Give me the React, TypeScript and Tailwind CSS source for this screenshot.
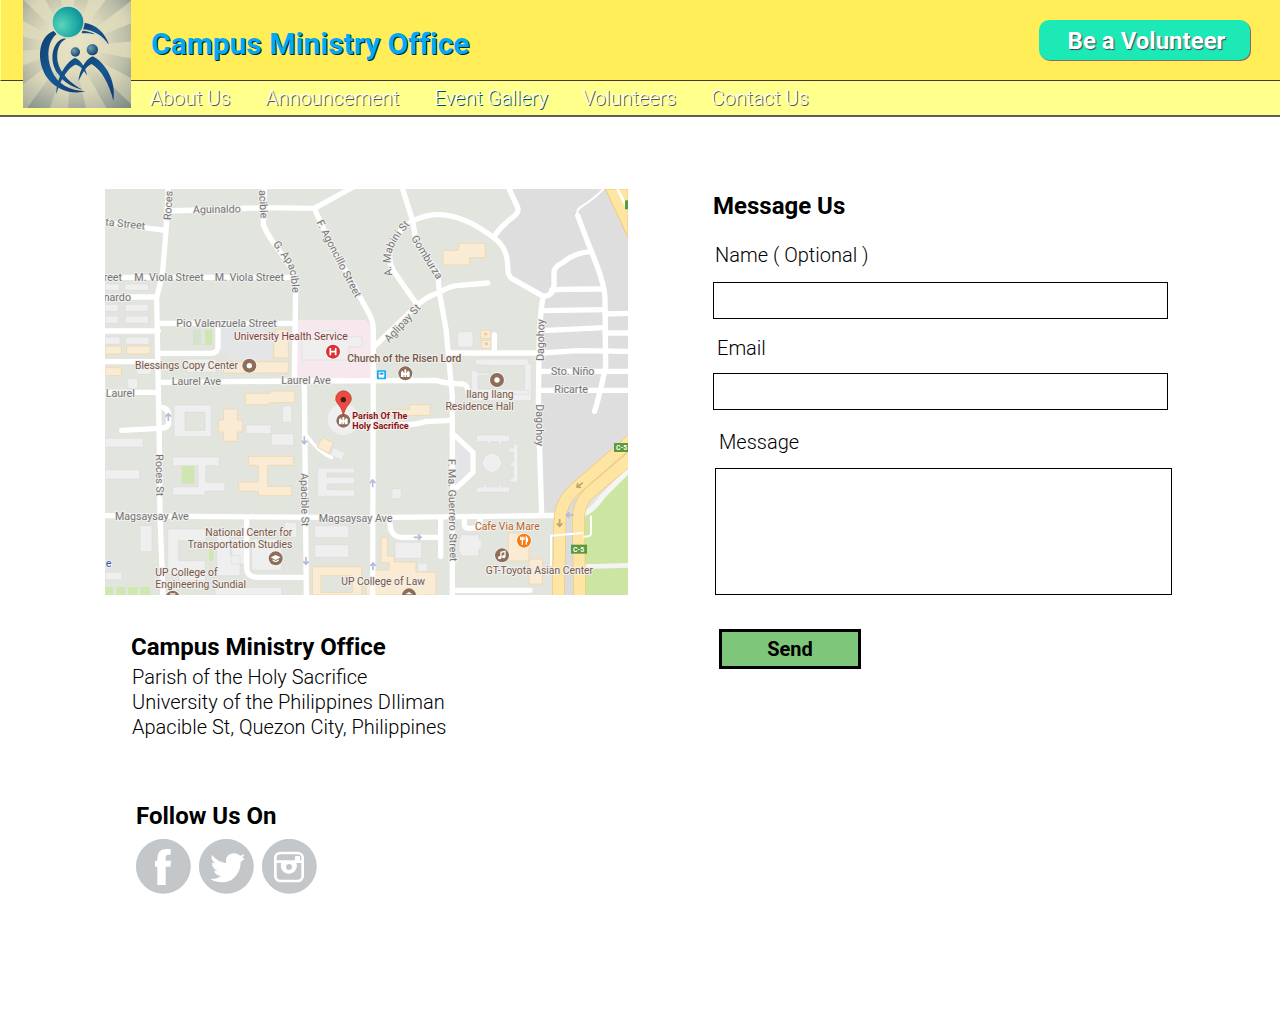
import React from "react";

const minorRoads = [
  "M190 0 L183 125 L172 260 L155 325 L160 606 L163 760 L165 980 L174 1218",
  "M190 66 L480 56 L628 58 L745 -6",
  "M0 100 L180 124",
  "M478 0 L475 105 Q478 122 515 175 L556 232 Q572 255 572 300 L568 575",
  "M628 58 L665 140 L790 370 Q805 395 805 425 L803 1218",
  "M0 265 H572",
  "M0 324 H155",
  "M160 403 H568",
  "M0 426 H160",
  "M162 493 H318 Q339 493 339 472 V410",
  "M0 518 H160",
  "M165 580 L600 576 L993 574 Q1020 585 1075 585 Q1088 588 1090 612",
  "M0 610 H160",
  "M598 580 L600 800 L604 1218",
  "M165 655 Q191 655 191 680 V700 Q191 718 165 718 L50 724",
  "M935 345 L865 245 Q840 200 870 150 Q905 85 990 77 Q1070 73 1165 145 L1182 160 Q1207 185 1208 230 Q1208 260 1220 268 L1315 322",
  "M1210 -6 L1238 55 Q1243 68 1227 82 Q1190 108 1165 145",
  "M893 0 L923 95 L933 160 L998 250 L1003 310 L1023 420 L1038 580 L1042 620 V1218",
  "M1148 282 L1055 290 Q1040 290 1003 310 Q960 325 930 355 L805 475",
  "M1035 492 H1310 L1420 485 L1569 487",
  "M1168 437 V492",
  "M1315 322 Q1305 360 1302 490 L1300 660 L1310 975",
  "M1315 322 Q1345 320 1347 290 V250 Q1348 232 1375 220 Q1410 190 1460 188",
  "M1340 303 Q1350 300 1495 300",
  "M1418 80 L1460 190 Q1500 285 1500 330 L1502 530 Q1490 595 1469 667",
  "M1310 365 L1500 362",
  "M1500 375 L1569 373",
  "M1310 425 L1500 416",
  "M1500 432 H1569",
  "M1305 547 H1569",
  "M1305 604 H1569",
  "M0 980 L330 983 L783 986 L1240 981 L1420 978",
  "M425 985 V1140 Q428 1165 458 1165 H600",
  "M853 990 L857 1020 Q865 1045 890 1045 H1000",
  "M1007 985 V1102",
  "M1078 990 V1008 Q1080 1020 1100 1018 Q1124 1018 1126 990",
  "M1050 740 L1104 790 V850 L1055 896",
  "M870 707 Q930 709 960 698 L1040 694",
  "M1050 1204 H1275",
];

const greyBuildings = [
  "M0 285 h44 v19 h-44z M60 285 h71 v19 h-71z M0 346 h40 v21 h-40z M61 346 h69 v21 h-69z M0 381 h40 v22 h-40z M61 381 h69 v22 h-69z",
  "M0 444 h45 v22 h-45z M62 444 h70 v22 h-70z M95 534 h44 v22 h-44z M68 568 h30 v30 h-30z M245 510 h88 v40 h-88z",
  "M590 450 h61 v-25 h50 v18 h70 v30 h-40 v40 h-141z",
  "M1058 428 h46 v46 h-46z",
  "M1110 510 h160 v15 h9 v110 h-180 v-90 h18z",
  "M207 648 h112 v95 h-112z",
  "M0 748 h115 v26 h-115z M0 842 h104 v28 h-104z",
  "M203 804 h139 v26 h-40 v50 h58 v26 h-60 v12 h-97 v-25 h76 v-63 h-76z",
  "M423 708 h76 v26 h67 v35 h-67 v-35 h-76z M535 650 h25 v50 h-28 v-30z",
  "M638 837 h111 v15 h-56 v12 h56 v20 h-56 v18 h56 v20 h-111z M685 775 l35 17 l-10 22 l-35 -17z",
  "M629 1010 h102 v36 h-102z M629 1067 h102 v38 h-102z M105 1010 h36 v78 h-36z M0 1150 h50 v22 h-50z",
  "M188 1020 h115 v35 h-82 v60 h80 v60 h-80 v-20 h-33z M335 1020 h40 v80 h30 v60 h-70z M380 1050 h40 v75 h-40z M440 1050 h90 v94 h-90z M538 1000 h37 v45 h-37z",
  "M330 1195 h200 v23 h-200z",
  "M1114 738 h100 v20 h-24 v10 h-8 v-10 h-26 v6 h-8 v-6 h-34z M1225 765 h14 v115 h-24 v-13 h10 v-35 h-10 v-12 h10 v-30 h-14 v-13 h14z M1114 894 h22 v-10 h8 v10 h36 v-8 h8 v8 h26 v16 h-100z",
  "M861 899 h28 v30 h-28z M870 1060 h80 v48 h-80z M938 1122 h28 v26 h-28z M1067 1037 h54 v14 h8 v30 h-8 v20 h-54 v-12 h-5 v-40 h5z",
  "M1161 791 l20 10 l10 22 l-10 20 l-20 9 l-20 -9 l-10 -20 l10 -22z",
  "M1220 604 h50 v12 h-50z",
];

const tanBuildings = [
  "M0 471 h49 v24 h-49z M64 471 h72 v24 h-72z M0 536 h49 v24 h-49z",
  "M512 422 h38 v85 h-44 v-30z M355 518 h195 v34 h-195z",
  "M1061 163 h80 v43 h-47 v22 h-80 v-44 h47z",
  "M1127 424 h30 v24 h-30z M1130 454 h27 v24 h-27z",
  "M421 613 h75 v-7 h73 v35 h-76 v6 h-72z",
  "M355 660 h42 v33 h15 v36 h-15 v28 h-42 v-28 h-15 v-36 h15z",
  "M430 802 h135 v27 h-77 v63 h72 v28 h-100 v-13 h-59 v-28 h59 v-50 h-30z",
  "M684 620 h20 v14 h-20z",
  "M622 1133 h148 v85 h-148z M853 662 h60 v-15 h62 v32 h-122z",
  "M828 1046 h20 v55 h20 v18 h65 v30 h60 v69 h-210 v-40 h24 v-35 h45 v-22 h-24z",
  "M1210 1032 h62 v84 h-62z M1272 1110 h40 v75 h-40z",
];

function MapLabel({ x, y, children, angle = 0, color = "#757575", size = 32, weight = 400, anchor = "start" }: {
  x: number;
  y: number;
  children: string;
  angle?: number;
  color?: string;
  size?: number;
  weight?: number;
  anchor?: "start" | "middle" | "end";
}) {
  return (
    <text
      x={x}
      y={y}
      transform={`rotate(${angle} ${x} ${y})`}
      fill={color}
      stroke="#f0f0ee"
      strokeWidth={6}
      strokeLinejoin="round"
      paintOrder="stroke"
      fontSize={size}
      fontWeight={weight}
      textAnchor={anchor}
    >
      {children}
    </text>
  );
}

function CurvedLabel({ id, d, children }: { id: string; d: string; children: string }) {
  return (
    <>
      <path id={id} d={d} fill="none" />
      <text fill="#757575" stroke="#f0f0ee" strokeWidth={6} strokeLinejoin="round" paintOrder="stroke" fontSize={32}>
        <textPath href={`#${id}`}>{children}</textPath>
      </text>
    </>
  );
}

function Arrow({ x, y, angle, color = "#b4bbd8" }: { x: number; y: number; angle: number; color?: string }) {
  return (
    <path
      d="M-12 0 H10 M1 -8 L10 0 L1 8"
      transform={`translate(${x} ${y}) rotate(${angle})`}
      fill="none"
      stroke={color}
      strokeWidth={5}
    />
  );
}

function Poi({ x, y, color = "#8d6e5a", children }: { x: number; y: number; color?: string; children: React.ReactNode }) {
  return (
    <g transform={`translate(${x} ${y})`}>
      <circle r={23} fill="#fff" opacity={0.8} />
      <circle r={21} fill={color} />
      {children}
    </g>
  );
}

const church = <path d="M-13 11 V-4 L-9 -8 L-5 -4 V11z M-3 11 V-9 L0 -14 L3 -9 V11z M5 11 V-4 L9 -8 L13 -4 V11z M-6 -1 H6 V5 H-6z" fill="#fff" />;

function CampusMap() {
  const brown = "#795746";
  return (
    <svg
      viewBox="0 0 1569 1218"
      className="block w-full"
      role="img"
      aria-label="Map of the Parish of the Holy Sacrifice and nearby streets"
    >
      <rect width="1569" height="1218" fill="#e2e4de" />
      <path d="M1210 0 H1569 V756 L1355 950 L1350 975 H1310 L1300 606 L1315 322 L1208 262 L1200 180 L1165 145 L1240 65z" fill="#dedede" />
      <path d="M576 393 H783 L805 425 V567 H576z" fill="#f7e8ee" />
      <path d="M345 405 H505 V512 H365 V490 H345z M1050 740 L1104 790 V850 L1050 896z" fill="#e4e5e6" />
      <path d="M1569 835 L1440 985 V1218 H1569z" fill="#cce5a2" />
      <path d="M300 422 h22 v46 h-22z M312 1080 h13 v35 h-13z" fill="#cfe6b2" />
      <path d="M264 422 h24 v46 h-24z" fill="#d5e2cc" />
      <path d="M0 1194 h24 v24 h-24z M34 1194 h27 v24 h-27z M69 1194 h28 v24 h-28z M106 1194 h28 v24 h-28z" fill="#cfe8ad" />
      <g fill="#efefef" stroke="#dcdddd" strokeWidth={2}>
        {greyBuildings.map((d) => <path key={d} d={d} />)}
      </g>
      <path d="M230 830 h38 v54 h-38z" fill="#cfe6b2" />
      <g fill="#e2e4de" stroke="#d8dad8" strokeWidth={2}>
        <path d="M240 670 h60 v54 h-60z M1155 530 h104 v70 h-140 v-40 h36z M1118 528 h34 v24 h-34z M666 852 h26 v12 h-26z M666 885 h26 v16 h-26z" />
      </g>
      <g fill="#faebd4" stroke="#efd9b4" strokeWidth={3}>
        {tanBuildings.map((d) => <path key={d} d={d} />)}
      </g>
      <path d="M648 1160 h94 v50 h-94z" fill="#e2e4de" stroke="#efd9b4" strokeWidth={3} />
      <path d="M1137 431 h10 v8 h-10z M1139 460 h10 v9 h-10z" fill="#e9cfa2" />
      <circle cx="715" cy="691" r="47" fill="#efefef" />
      <g fill="none" stroke="#fff" strokeWidth={16} strokeLinecap="round" strokeLinejoin="round">
        {minorRoads.map((d) => <path key={d} d={d} />)}
        <path d="M606 740 Q640 790 680 806" strokeWidth={10} />
        <path d="M1500 -6 Q1480 20 1425 56 Q1417 62 1416 74" strokeWidth={6} />
        <path d="M1575 840 L1495 920 Q1455 975 1430 975" strokeWidth={16} stroke="#f5f5f5" />
        <path d="M1440 1133 L1569 1129" strokeWidth={14} stroke="#f4f4f4" />
      </g>
      <path d="M651 746 l34 15 l-14 32 l-34 -18z" fill="#faebd4" stroke="#efd9b4" strokeWidth={3} />
      <path d="M1501 0 H1569 V145z" fill="#ffe5a4" stroke="#eccb78" strokeWidth={3} />
      <path d="M1537 0 L1569 62" stroke="#fff" strokeWidth={8} />
      <path d="M1380 1218 V990 Q1385 950 1410 930 L1569 780 L1569 812 L1440 940 L1408 990 V1218z" fill="#d9dbdc" />
      <g fill="none">
        <path d="M1590 744 L1410 900 Q1367 940 1365 990 L1360 1222" stroke="#ecc973" strokeWidth={38} />
        <path d="M1590 796 L1450 915 Q1422 942 1420 990 L1424 1222" stroke="#ecc973" strokeWidth={38} />
        <path d="M1590 744 L1410 900 Q1367 940 1365 990 L1360 1222" stroke="#ffe5a4" strokeWidth={34} />
        <path d="M1590 796 L1450 915 Q1422 942 1420 990 L1424 1222" stroke="#ffe5a4" strokeWidth={34} />
        <path d="M1338 1130 V1040 L1435 1032 M1458 980 V1035 Q1458 1043 1435 1043" stroke="#fff" strokeWidth={6} />
      </g>

      <Arrow x={190} y={684} angle={-90} />
      <Arrow x={598} y={754} angle={90} />
      <Arrow x={603} y={1116} angle={90} />
      <Arrow x={803} y={883} angle={-90} />
      <Arrow x={804} y={1132} angle={-90} />
      <Arrow x={938} y={1045} angle={0} />
      <Arrow x={1394} y={978} angle={180} />
      <Arrow x={1424} y={888} angle={142} color="#bca66f" />
      <Arrow x={1364} y={1002} angle={90} color="#bca66f" />

      <MapLabel x={198} y={94} angle={-87}>Roces</MapLabel>
      <MapLabel x={264} y={73} angle={-1}>Aguinaldo</MapLabel>
      <MapLabel x={0} y={109} angle={6}>ta Street</MapLabel>
      <MapLabel x={462} y={4} angle={87}>acible</MapLabel>
      <CurvedLabel id="g-apacible" d="M503 166 L545 222 Q560 250 562 320">G. Apacible</CurvedLabel>
      <CurvedLabel id="agoncillo" d="M634 100 L690 210 L765 355">F. Agoncillo Street</CurvedLabel>
      <MapLabel x={-4} y={276}>reet</MapLabel>
      <MapLabel x={88} y={276}>M. Viola Street</MapLabel>
      <MapLabel x={329} y={277}>M. Viola Street</MapLabel>
      <MapLabel x={-4} y={336}>nardo</MapLabel>
      <MapLabel x={214} y={413}>Pio Valenzuela Street</MapLabel>
      <MapLabel x={200} y={589}>Laurel Ave</MapLabel>
      <MapLabel x={529} y={586}>Laurel Ave</MapLabel>
      <MapLabel x={2} y={624}>Laurel</MapLabel>
      <CurvedLabel id="mabini" d="M862 260 Q850 210 866 175 Q878 145 918 104">A. Mabini St</CurvedLabel>
      <CurvedLabel id="gomburza" d="M918 147 L950 200 L1007 290">Gomburza</CurvedLabel>
      <CurvedLabel id="aglipay" d="M852 462 L910 400 L965 340">Aglipay St</CurvedLabel>
      <MapLabel x={1316} y={516} angle={-89}>Dagohoy</MapLabel>
      <MapLabel x={1294} y={646} angle={90}>Dagohoy</MapLabel>
      <MapLabel x={1338} y={558}>Sto. Niño</MapLabel>
      <MapLabel x={1348} y={613}>Ricarte</MapLabel>
      <MapLabel x={152} y={796} angle={89}>Roces St</MapLabel>
      <MapLabel x={587} y={852} angle={89}>Apacible St</MapLabel>
      <MapLabel x={1029} y={810} angle={89}>F. Ma. Guerrero Street</MapLabel>
      <MapLabel x={30} y={993}>Magsaysay Ave</MapLabel>
      <MapLabel x={641} y={998}>Magsaysay Ave</MapLabel>

      <Poi x={684} y={488} color="#dc3034"><path d="M-8 -11 V11 M8 -11 V11 M-8 0 H8" stroke="#fff" strokeWidth={5} /></Poi>
      <Poi x={433} y={530}><circle r={8} fill="#fff" /></Poi>
      <Poi x={1176} y={573}><circle r={8} fill="#fff" /></Poi>
      <Poi x={901} y={553}>{church}</Poi>
      <Poi x={715} y={695}>{church}</Poi>
      <Poi x={512} y={1108}><path d="M0 -10 L15 -3 L0 5 L-15 -3z M-9 3 V8 L0 12 L9 8 V3 L0 8z" fill="#fff" /></Poi>
      <Poi x={1191} y={1099}><path d="M-3 7 V-9 L9 -12 V4" fill="none" stroke="#fff" strokeWidth={4} /><circle cx={-7} cy={7} r={5} fill="#fff" /><circle cx={5} cy={4} r={5} fill="#fff" /></Poi>
      <Poi x={1257} y={1055} color="#f57c13"><path d="M-5 -12 V12 M-10 -12 V-4 H0 V-12 M7 12 V-11 Q12 -6 10 2 H7" fill="none" stroke="#fff" strokeWidth={4} /></Poi>
      <Poi x={203} y={1226}><path d="M-8 -11 H8" stroke="#fff" strokeWidth={4} /></Poi>
      <Poi x={912} y={1219}><path d="M-11 -3 L0 -10 L11 -3z" fill="#fff" /></Poi>

      <MapLabel x={387} y={454} size={31} color="#843c3c">University Health Service</MapLabel>
      <MapLabel x={727} y={519} size={31} color={brown} weight={500}>Church of the Risen Lord</MapLabel>
      <MapLabel x={90} y={541} size={31} color={brown}>Blessings Copy Center</MapLabel>
      <MapLabel x={1226} y={628} size={31} color={brown} anchor="end">Ilang Ilang</MapLabel>
      <MapLabel x={1226} y={663} size={31} color={brown} anchor="end">Residence Hall</MapLabel>
      <MapLabel x={742} y={690} color="#8f1013" weight={700} size={27}>Parish Of The</MapLabel>
      <MapLabel x={742} y={721} color="#8f1013" weight={700} size={27}>Holy Sacrifice</MapLabel>
      <MapLabel x={562} y={1041} size={31} color={brown} anchor="end">National Center for</MapLabel>
      <MapLabel x={562} y={1077} size={31} color={brown} anchor="end">Transportation Studies</MapLabel>
      <MapLabel x={151} y={1160} size={31} color={brown}>UP College of</MapLabel>
      <MapLabel x={151} y={1196} size={31} color={brown}>Engineering Sundial</MapLabel>
      <MapLabel x={709} y={1187} size={31} color={brown}>UP College of Law</MapLabel>
      <MapLabel x={1110} y={1022} size={31} color="#b8642a">Cafe Via Mare</MapLabel>
      <MapLabel x={1142} y={1155} size={31} color={brown}>GT-Toyota Asian Center</MapLabel>
      <MapLabel x={2} y={1133} color="#4050b5">e</MapLabel>

      <rect x={816} y={544} width={27} height={27} rx={3} fill="#12a5f4" />
      <path d="M821 548 h17 v17 h-3 v3 h-4 v-3 h-4 v3 h-4 v-3 h-2z" fill="#fff" />
      <path d="M824 551 h11 v6 h-11z" fill="#12a5f4" />

      <path d="M715 684 C713 650 692 645 692 629 A23 23 0 0 1 739 629 C739 645 718 650 715 684z" fill="#ea4b40" stroke="#b5332c" strokeWidth={2} />
      <circle cx={715} cy={632} r={8} fill="#511814" />

      <rect x={1560} y={34} width={9} height={27} fill="#5a9a3c" />
      {[[1527, 762], [1398, 1067]].map(([x, y]) => (
        <g key={x}>
          <rect x={x} y={y} width={48} height={27} fill="#5a9a3c" />
          <text x={x + 6} y={y + 21} fontSize={21} fontWeight={700} fill="#fff">C-5</text>
        </g>
      ))}
    </svg>
  );
}

const rays = Array.from({ length: 11 }, (_, i) => {
  const a = (i * 2 * Math.PI) / 11 + 0.2;
  const b = a + Math.PI / 11;
  const point = (t: number) => `${Math.round(215 + 400 * Math.cos(t))} ${Math.round(140 + 400 * Math.sin(t))}`;
  return `M215 140 L${point(a)} L${point(b)}z`;
});

function Logo() {
  return (
    <svg viewBox="69 0 324 324" className="block size-[108px] shrink-0" role="img" aria-label="Campus Ministry logo">
      <defs>
        <radialGradient id="paper" gradientUnits="userSpaceOnUse" cx="225" cy="120" r="260">
          <stop offset="0" stopColor="#e9e4c6" />
          <stop offset="0.6" stopColor="#dad6b8" />
          <stop offset="1" stopColor="#a3aa9a" />
        </radialGradient>
        <radialGradient id="ray" gradientUnits="userSpaceOnUse" cx="215" cy="130" r="270">
          <stop offset="0.3" stopColor="#7c8b8a" stopOpacity="0" />
          <stop offset="0.65" stopColor="#7c8b8a" stopOpacity="0.35" />
          <stop offset="1" stopColor="#5e7273" stopOpacity="0.65" />
        </radialGradient>
        <radialGradient id="ball" cx="0.3" cy="0.6" r="0.8">
          <stop offset="0" stopColor="#5bd5ba" />
          <stop offset="0.6" stopColor="#1eaaa5" />
          <stop offset="1" stopColor="#0c858f" />
        </radialGradient>
        <linearGradient id="ink" x1="0" y1="0" x2="1" y2="1">
          <stop offset="0" stopColor="#123f70" />
          <stop offset="0.5" stopColor="#155a94" />
          <stop offset="1" stopColor="#12346c" />
        </linearGradient>
        <radialGradient id="head" cx="0.35" cy="0.35" r="0.7">
          <stop offset="0" stopColor="#6aa3ac" />
          <stop offset="1" stopColor="#123e72" />
        </radialGradient>
      </defs>
      <rect x="69" width="324" height="324" fill="url(#paper)" />
      {rays.map((d) => <path key={d} d={d} fill="url(#ray)" />)}
      <g fill="url(#ink)">
        <path d="M160 93 C112 112 108 190 144 236 C171 271 216 284 257 274 C209 273 171 252 155 211 C137 166 144 121 173 99z" />
        <path d="M196 114 C153 122 146 187 175 223 C191 248 219 263 248 269 C213 252 180 219 173 185 C168 153 177 125 199 116z" />
        <path d="M253 68 C288 73 316 99 327 134 C307 107 284 91 248 88z M247 92 C260 92 273 96 285 103 C270 99 257 99 245 100z" />
        <path d="M169 282 C169 235 198 185 225 174 C243 179 257 205 261 227 C251 208 239 195 225 194 C200 207 181 242 169 282z" />
        <path d="M235 244 C240 208 255 179 278 169 C315 187 350 242 340 302 C329 255 305 210 275 192 C256 200 246 223 235 244z" />
      </g>
      <circle cx="204" cy="66" r="50" fill="#dedfc8" />
      <circle cx="204" cy="66" r="46" fill="url(#ball)" />
      <circle cx="226" cy="156" r="14" fill="url(#head)" />
      <circle cx="277" cy="149" r="17" fill="url(#head)" />
    </svg>
  );
}

const navItems = ["About Us", "Announcement", "Event Gallery", "Volunteers", "Contact Us"];

const socials = [
  {
    name: "Facebook",
    art: <path d="M64 138 V83 H57 V65 H64 V58 Q64 30 92 30 H104 V47 H96 Q89 47 89 55 V65 H105 L103 83 H89 V138z" fill="#fff" />,
  },
  {
    name: "Twitter",
    art: (
      <path
        d="M39 48 Q56 70 82 72 C77 53 92 42 107 43 Q117 44 124 50 L136 46 Q134 54 127 58 L137 57 Q132 65 125 69 C125 106 99 130 70 130 Q49 130 34 120 Q53 121 66 111 Q50 109 45 95 H55 Q40 89 38 71 L48 73 Q33 60 39 48z"
        fill="#fff"
      />
    ),
  },
  {
    name: "Instagram",
    art: (
      <>
        <rect x="40" y="42" width="82" height="84" rx="15" fill="none" stroke="#fff" strokeWidth={8} />
        <path d="M40 64 H122 V72 H103 A24 24 0 1 1 58 72 H40z" fill="#fff" />
        <circle cx="81" cy="84" r="9" fill="#c3c7ca" />
        <rect x="99" y="51" width="15" height="15" rx="3" fill="#fff" />
      </>
    ),
  },
];

export default function App() {
  return (
    <div className="min-h-screen bg-white font-['Roboto',sans-serif] text-black">
      <header className="relative border-b-2 border-[#5c5c5c] bg-[#ffff8c]">
        <div className="flex h-[81px] items-center justify-between border-b border-l border-b-[#44352f] border-l-[#ffff8c] bg-[#ffee58] pr-[30px] pl-[150px]">
          <h1 className="pt-2 text-[30px] leading-9 font-bold text-[#03a9f4] [font-variant-ligatures:none] [text-shadow:1px_1px_0_#04263d]">
            Campus Ministry Office
          </h1>
          <button
            type="button"
            className="h-10 w-[211px] rounded-[10px] bg-[#1de9b6] pt-px pl-1 text-2xl font-bold text-white [box-shadow:1px_1px_0_#846b68] [text-shadow:1px_1px_1px_#37474f]"
          >
            Be a Volunteer
          </button>
        </div>
        <nav aria-label="Main" className="flex h-[34px] items-center gap-[35px] pl-[150px]">
          {navItems.map((item) => (
            <a
              key={item}
              href="#"
              className="text-xl font-light whitespace-nowrap text-white [text-shadow:1px_1px_0_#55554c] nth-3:[text-shadow:1px_1px_0_#00504f]"
            >
              {item}
            </a>
          ))}
        </nav>
        <div className="absolute top-0 left-[23px]">
          <Logo />
        </div>
      </header>

      <main className="grid grid-cols-[523fr_459fr] gap-x-[85px] pt-[72px] pr-[108px] pb-12 pl-[105px]">
        <section>
          <CampusMap />
          <div className="pt-9 pl-[26px]">
            <h2 className="text-2xl font-bold [font-variant-ligatures:none]">Campus Ministry Office</h2>
            <address className="pt-[2px] pl-px text-xl leading-[25px] font-light not-italic">
              <p>Parish of the Holy Sacrifice</p>
              <p>University of the Philippines DIliman</p>
              <p>Apacible St, Quezon City, Philippines</p>
            </address>
          </div>
          <div className="pt-[60px] pl-[31px]">
            <h2 className="text-2xl font-bold">Follow Us On</h2>
            <div className="flex gap-2 pt-[7px]">
              {socials.map(({ name, art }) => (
                <a key={name} href="#" aria-label={name}>
                  <svg viewBox="0 0 165 165" className="block size-[55px]">
                    <circle cx="82" cy="82" r="81" fill="#c3c7ca" stroke="#b6bbc0" strokeWidth={2} />
                    {art}
                  </svg>
                </a>
              ))}
            </div>
          </div>
        </section>

        <form className="flex flex-col items-start pt-px" onSubmit={(event) => event.preventDefault()}>
          <h2 className="text-2xl font-bold">Message Us</h2>
          <label htmlFor="name" className="pt-[19px] pl-[2px] text-xl font-light">Name ( Optional )</label>
          <div className="w-full pt-[13px] pr-1">
            <input id="name" type="text" className="block h-[37px] w-full border border-black bg-white px-2 text-xl font-light" />
          </div>
          <label htmlFor="email" className="pt-[15px] pl-1 text-xl font-light">Email</label>
          <div className="w-full pt-[11px] pr-1">
            <input id="email" type="email" className="block h-[37px] w-full border border-black bg-white px-2 text-xl font-light" />
          </div>
          <label htmlFor="message" className="pt-[18px] pl-[6px] text-xl font-light">Message</label>
          <div className="w-full pt-3 pl-[2px]">
            <textarea id="message" className="block h-[127px] w-full resize-none border border-black bg-white p-2 text-xl font-light" />
          </div>
          <div className="pt-[34px] pl-[6px]">
            <button type="submit" className="h-10 w-[142px] border-3 border-black bg-[#7dc67a] text-xl leading-none font-bold">
              Send
            </button>
          </div>
        </form>
      </main>
    </div>
  );
}
